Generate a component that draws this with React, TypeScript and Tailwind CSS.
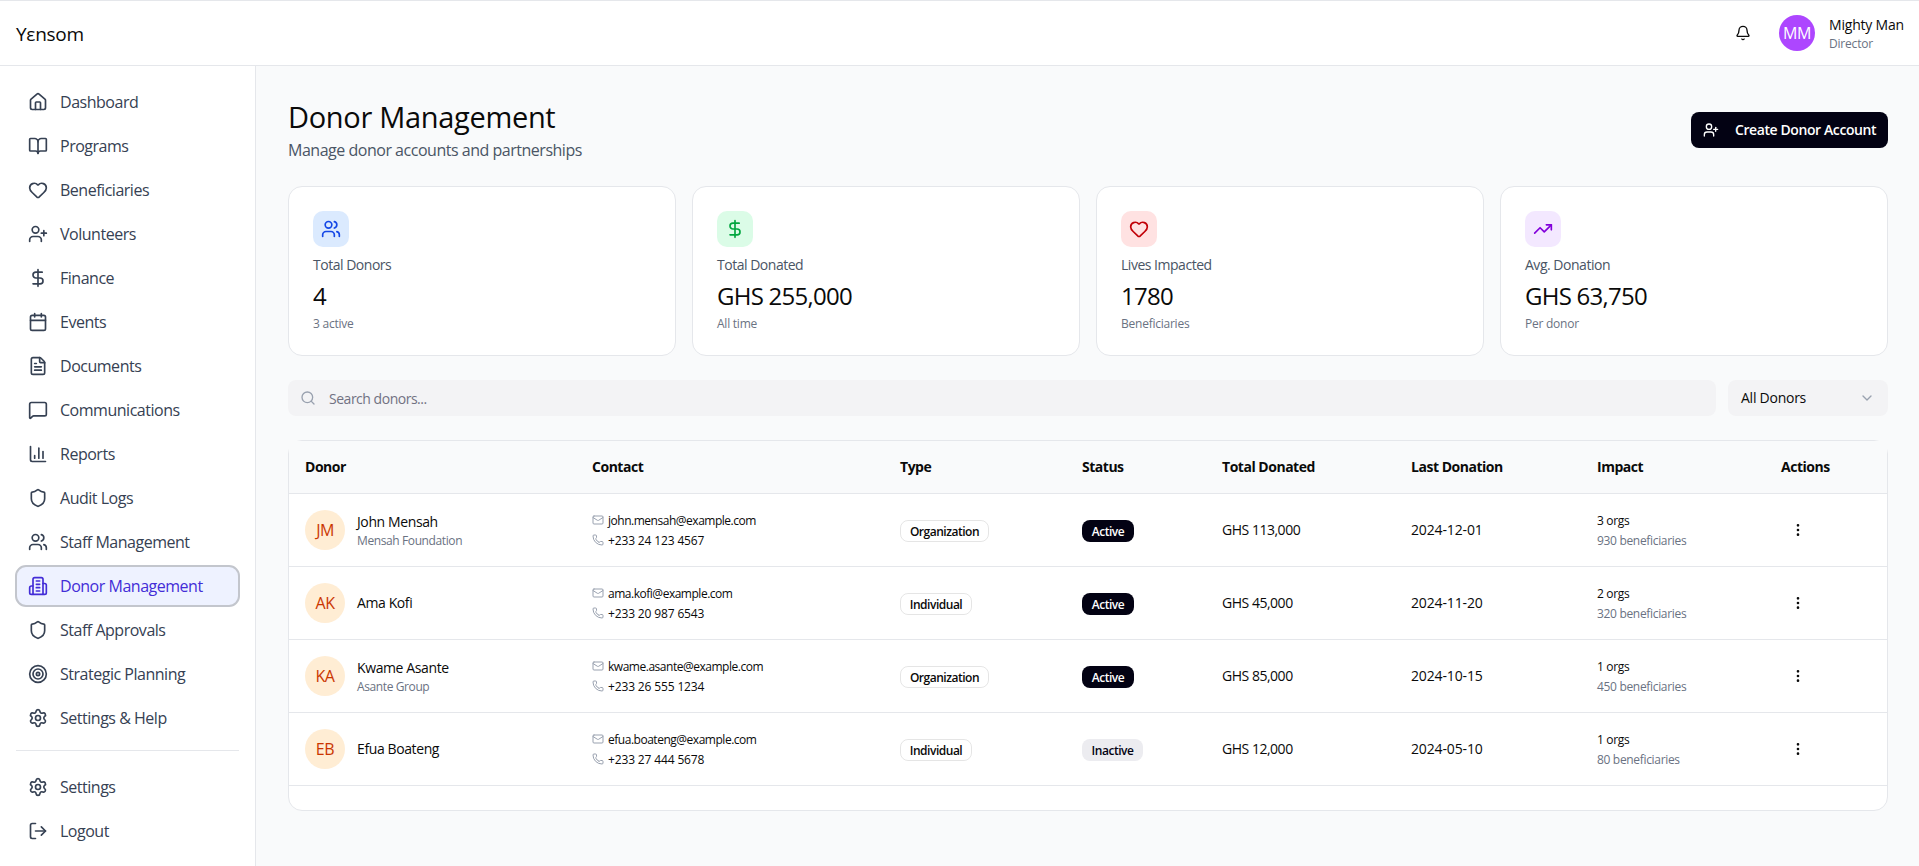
import {
  Bell,
  BookOpen,
  Calendar,
  ChartColumn,
  ChevronDown,
  DollarSign,
  EllipsisVertical,
  FileText,
  Heart,
  House,
  LogOut,
  Mail,
  MessageSquare,
  Phone,
  Search,
  Settings,
  Shield,
  Target,
  TrendingUp,
  UserPlus,
  Users,
} from 'lucide-react';
import type { ComponentType } from 'react';

type IconType = ComponentType<{ className?: string }>;

interface Donor {
  initials: string;
  name: string;
  company?: string;
  email: string;
  phone: string;
  type: 'Organization' | 'Individual';
  status: 'Active' | 'Inactive';
  total: string;
  lastDonation: string;
  orgs: number;
  beneficiaries: number;
}

// Office block with four floors
function Building({ className }: { className?: string }) {
  return (
    <svg
      className={className}
      viewBox="0 0 24 24"
      fill="none"
      stroke="currentColor"
      strokeWidth="2"
      strokeLinecap="round"
      strokeLinejoin="round"
    >
      <path d="M6 22V4a2 2 0 0 1 2-2h8a2 2 0 0 1 2 2v18Z" />
      <path d="M6 12H4a2 2 0 0 0-2 2v6a2 2 0 0 0 2 2h2" />
      <path d="M18 9h2a2 2 0 0 1 2 2v9a2 2 0 0 1-2 2h-2" />
      <path d="M10 6h4" />
      <path d="M10 10h4" />
      <path d="M10 14h4" />
      <path d="M10 18h4" />
    </svg>
  );
}

const navItems: { label: string; icon: IconType }[] = [
  { label: 'Dashboard', icon: House },
  { label: 'Programs', icon: BookOpen },
  { label: 'Beneficiaries', icon: Heart },
  { label: 'Volunteers', icon: UserPlus },
  { label: 'Finance', icon: DollarSign },
  { label: 'Events', icon: Calendar },
  { label: 'Documents', icon: FileText },
  { label: 'Communications', icon: MessageSquare },
  { label: 'Reports', icon: ChartColumn },
  { label: 'Audit Logs', icon: Shield },
  { label: 'Staff Management', icon: Users },
  { label: 'Donor Management', icon: Building },
  { label: 'Staff Approvals', icon: Shield },
  { label: 'Strategic Planning', icon: Target },
  { label: 'Settings & Help', icon: Settings },
];

const stats = [
  { label: 'Total Donors', value: '4', note: '3 active', icon: Users, color: 'bg-blue-100 text-blue-700' },
  { label: 'Total Donated', value: 'GHS 255,000', note: 'All time', icon: DollarSign, color: 'bg-green-100 text-green-600' },
  { label: 'Lives Impacted', value: '1780', note: 'Beneficiaries', icon: Heart, color: 'bg-red-100 text-red-700' },
  { label: 'Avg. Donation', value: 'GHS 63,750', note: 'Per donor', icon: TrendingUp, color: 'bg-purple-100 text-purple-700' },
];

const donors: Donor[] = [
  {
    initials: 'JM',
    name: 'John Mensah',
    company: 'Mensah Foundation',
    email: 'john.mensah@example.com',
    phone: '+233 24 123 4567',
    type: 'Organization',
    status: 'Active',
    total: 'GHS 113,000',
    lastDonation: '2024-12-01',
    orgs: 3,
    beneficiaries: 930,
  },
  {
    initials: 'AK',
    name: 'Ama Kofi',
    email: 'ama.kofi@example.com',
    phone: '+233 20 987 6543',
    type: 'Individual',
    status: 'Active',
    total: 'GHS 45,000',
    lastDonation: '2024-11-20',
    orgs: 2,
    beneficiaries: 320,
  },
  {
    initials: 'KA',
    name: 'Kwame Asante',
    company: 'Asante Group',
    email: 'kwame.asante@example.com',
    phone: '+233 26 555 1234',
    type: 'Organization',
    status: 'Active',
    total: 'GHS 85,000',
    lastDonation: '2024-10-15',
    orgs: 1,
    beneficiaries: 450,
  },
  {
    initials: 'EB',
    name: 'Efua Boateng',
    email: 'efua.boateng@example.com',
    phone: '+233 27 444 5678',
    type: 'Individual',
    status: 'Inactive',
    total: 'GHS 12,000',
    lastDonation: '2024-05-10',
    orgs: 1,
    beneficiaries: 80,
  },
];

const rowGrid = 'grid grid-cols-[287px_308px_182px_140px_189px_186px_184px_1fr] items-center';

function NavItem({ label, icon: Icon, active }: { label: string; icon: IconType; active?: boolean }) {
  return (
    <button
      className={
        active
          ? 'flex h-10 w-full items-center gap-3 rounded-[10px] bg-indigo-50 px-3 text-indigo-700 outline-2 -outline-offset-1 outline-[#c3c6cd]'
          : 'flex h-10 w-full items-center gap-3 rounded-[10px] px-3 text-gray-700'
      }
    >
      <Icon className="size-5 shrink-0" />
      <span className="whitespace-nowrap">{label}</span>
    </button>
  );
}

function Header() {
  return (
    <header className="flex h-[66px] shrink-0 items-center justify-between border-y border-gray-200 bg-white px-4">
      <span className="pt-px text-[19px]/7 tracking-[-0.015em]">Yεnsom</span>
      <div className="flex items-center">
        <Bell className="mr-7 size-4" />
        <div className="mr-3.5 flex size-9 items-center justify-center rounded-full bg-[#ad46ff] text-white">MM</div>
        <div className="w-[74px] tracking-[-0.012em] whitespace-nowrap">
          <p className="text-sm">Mighty Man</p>
          <p className="translate-y-px text-xs text-gray-500">Director</p>
        </div>
      </div>
    </header>
  );
}

function Sidebar() {
  return (
    <aside className="w-64 shrink-0 border-r border-gray-200 bg-white p-4">
      <nav className="space-y-1">
        {navItems.map((item) => (
          <NavItem key={item.label} {...item} active={item.label === 'Donor Management'} />
        ))}
      </nav>
      <div className="mt-3 space-y-1 border-t border-gray-200 pt-4">
        <NavItem label="Settings" icon={Settings} />
        <NavItem label="Logout" icon={LogOut} />
      </div>
    </aside>
  );
}

function DonorRow({ donor }: { donor: Donor }) {
  return (
    <div className={`${rowGrid} h-[73px] border-b border-gray-200 text-sm *:pl-4`}>
      <div className="flex items-center gap-3">
        <div className="flex size-10 items-center justify-center rounded-full bg-orange-100 text-base text-orange-700">
          {donor.initials}
        </div>
        <div className="tracking-[-0.028em]">
          <p>{donor.name}</p>
          {donor.company && <p className="translate-y-px text-xs text-gray-500">{donor.company}</p>}
        </div>
      </div>
      <div className="space-y-1 text-xs">
        <div className="flex items-center gap-1">
          <Mail className="size-3 text-gray-400" />
          <span className="translate-y-px">{donor.email}</span>
        </div>
        <div className="flex items-center gap-1">
          <Phone className="size-3 text-gray-400" />
          <span className="translate-y-px tracking-[-0.012em]">{donor.phone}</span>
        </div>
      </div>
      <div className="flex pt-px">
        <span
          className={
            donor.type === 'Organization'
              ? 'flex h-[22px] w-[89px] items-center justify-center rounded-lg border border-black/10 pt-0.5 text-xs font-semibold'
              : 'flex h-[22px] w-[72px] items-center justify-center rounded-lg border border-black/10 pt-0.5 text-xs font-semibold'
          }
        >
          {donor.type}
        </span>
      </div>
      <div className="flex pt-px">
        <span
          className={
            donor.status === 'Active'
              ? 'flex h-[22px] w-[52px] items-center justify-center rounded-lg bg-[#030213] pt-0.5 text-xs font-semibold text-white'
              : 'flex h-[22px] w-[61px] items-center justify-center rounded-lg bg-[#ececf0] pt-0.5 text-xs font-semibold text-[#030213]'
          }
        >
          {donor.status}
        </span>
      </div>
      <p>{donor.total}</p>
      <p className="tracking-[-0.01em]">{donor.lastDonation}</p>
      <div className="translate-y-px space-y-1 text-xs tracking-[-0.027em]">
        <p>{donor.orgs} orgs</p>
        <p className="text-gray-500">{donor.beneficiaries} beneficiaries</p>
      </div>
      <div>
        <button className="-ml-px flex size-9 items-center justify-center">
          <EllipsisVertical className="size-4" />
        </button>
      </div>
    </div>
  );
}

export default function App() {
  return (
    <div className="flex h-[866px] flex-col overflow-hidden bg-gray-50 font-['Open_Sans',sans-serif] tracking-[-0.03em] text-neutral-950">
      <Header />
      <div className="flex flex-1">
        <Sidebar />
        <main className="flex-1 py-8 pr-[31px] pl-8">
          {/* Page title */}
          <div className="mb-6 flex items-center justify-between">
            <div>
              <h1 className="mb-1 translate-y-px text-[29px]/9 tracking-[-0.011em]">Donor Management</h1>
              <p className="text-gray-600">Manage donor accounts and partnerships</p>
            </div>
            <button className="flex h-9 w-[197px] items-center gap-4 rounded-lg bg-[#030213] px-3 text-sm font-semibold tracking-[-0.029em] whitespace-nowrap text-white">
              <UserPlus className="size-4 shrink-0" />
              Create Donor Account
            </button>
          </div>

          {/* Stats */}
          <div className="mb-6 grid grid-cols-4 gap-4">
            {stats.map(({ label, value, note, icon: Icon, color }) => (
              <div key={label} className="rounded-[14px] border border-gray-200 bg-white p-6">
                <div className={`mb-2 flex size-9 items-center justify-center rounded-[10px] ${color}`}>
                  <Icon className="size-5" />
                </div>
                <p className="mb-1 text-sm text-gray-600">{label}</p>
                <p className="mb-1 translate-y-px text-2xl tracking-[-0.031em]">{value}</p>
                <p className="translate-y-px text-xs tracking-[-0.02em] text-gray-500">{note}</p>
              </div>
            ))}
          </div>

          {/* Search and filter */}
          <div className="mb-6 flex gap-3 text-sm">
            <div className="flex h-9 flex-1 items-center gap-[13px] rounded-lg bg-[#f3f3f5] px-3 text-[#717182]">
              <Search className="size-4 text-gray-400" />
              <span className="translate-y-px">Search donors...</span>
            </div>
            <button className="flex h-9 w-40 items-center justify-between rounded-lg bg-[#f3f3f5] pr-[13px] pl-[13px] tracking-[-0.018em]">
              All Donors
              <ChevronDown className="size-4 text-gray-400" />
            </button>
          </div>

          {/* Donors table */}
          <div className="rounded-[14px] border border-gray-200 bg-white pb-6">
            <div className={`${rowGrid} h-[53px] border-b border-gray-200 bg-gray-50 text-sm font-bold *:pl-4`}>
              <span>Donor</span>
              <span>Contact</span>
              <span>Type</span>
              <span>Status</span>
              <span>Total Donated</span>
              <span>Last Donation</span>
              <span>Impact</span>
              <span>Actions</span>
            </div>
            {donors.map((donor) => (
              <DonorRow key={donor.email} donor={donor} />
            ))}
          </div>
        </main>
      </div>
    </div>
  );
}
